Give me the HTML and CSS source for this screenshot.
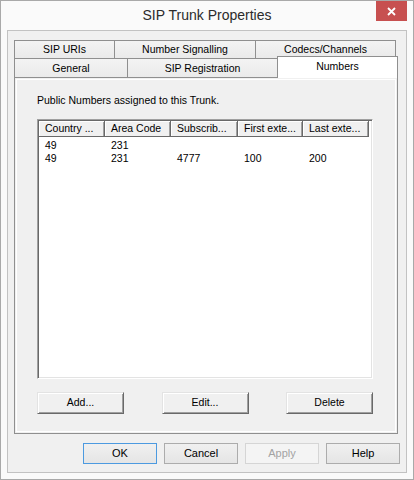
FILE: index.html
```html
<!DOCTYPE html>
<html lang="en">
<head>
  <meta charset="UTF-8">
  <title>SIP Trunk Properties</title>
  <link rel="stylesheet" href="styles.css">
</head>
<body>
  <div class="window">
    <div class="titlebar">
      <span class="title">SIP Trunk Properties</span>
      <button class="close" type="button" aria-label="Close">
        <svg width="9" height="9" viewBox="0 0 9 9">
          <path d="M1 1 L8 8 M8 1 L1 8" stroke="#fff" stroke-width="1.8" fill="none"/>
        </svg>
      </button>
    </div>

    <div class="client">
      <div class="tabs">
        <div class="tab-row">
          <div class="tab tab-uris">SIP URIs</div>
          <div class="tab tab-signalling">Number Signalling</div>
          <div class="tab tab-codecs">Codecs/Channels</div>
        </div>
        <div class="tab-row lower">
          <div class="tab tab-general">General</div>
          <div class="tab tab-registration">SIP Registration</div>
          <div class="tab tab-numbers active">Numbers</div>
        </div>
      </div>

      <div class="panel">
        <p class="hint">Public Numbers assigned to this Trunk.</p>

        <div class="listview">
          <div class="lv-head">
            <span>Country ...</span>
            <span>Area Code</span>
            <span>Subscrib...</span>
            <span>First exte...</span>
            <span>Last exte...</span>
          </div>
          <div class="lv-body">
            <div class="lv-row">
              <span>49</span><span>231</span><span></span><span></span><span></span>
            </div>
            <div class="lv-row">
              <span>49</span><span>231</span><span>4777</span><span>100</span><span>200</span>
            </div>
          </div>
        </div>

        <div class="panel-buttons">
          <button class="btn-classic" type="button">Add...</button>
          <button class="btn-classic" type="button">Edit...</button>
          <button class="btn-classic" type="button">Delete</button>
        </div>
      </div>

      <div class="dialog-buttons">
        <button class="btn default" type="button">OK</button>
        <button class="btn" type="button">Cancel</button>
        <button class="btn" type="button" disabled>Apply</button>
        <button class="btn" type="button">Help</button>
      </div>
    </div>
  </div>
</body>
</html>
```

FILE: styles.css
```css
* {
  box-sizing: border-box;
}
body {
  margin: 0;
  font-family: "Liberation Sans", Arial, sans-serif;
  font-size: 10.5px;
  color: #000;
  background: #fff;
}

/* window frame */
.window {
  width: 414px;
  height: 480px;
  border: 1px solid #a9a9a9;
  background: #fafafa;
  padding: 0 6px 6px;
  display: flex;
  flex-direction: column;
}
.titlebar {
  height: 29px;
  display: grid;
  grid-template-columns: 1fr auto 1fr;
  align-items: start;
}
.title {
  grid-column: 2;
  font-size: 14px;
  line-height: 29px;
  color: #2b2b2b;
}
.close {
  grid-column: 3;
  justify-self: end;
  width: 31px;
  height: 20px;
  padding: 0;
  border: 0;
  background: #c75050;
  display: flex;
  align-items: center;
  justify-content: center;
}
.client {
  flex: 1;
  border: 1px solid #c2c2c2;
  background: #f0f0f0;
  padding: 9px 0 0 6px;
}

/* tabs */
.tabs {
  width: 384px;
}
.tab-row {
  display: flex;
  align-items: flex-start;
}
.tab {
  height: 18px;
  line-height: 17px;
  margin-left: -1px;
  border: 1px solid #8f8f8f;
  border-bottom: 0;
  background: linear-gradient(#f3f3f3, #eaeaea);
  text-align: center;
  white-space: nowrap;
}
.tab:first-child {
  margin-left: 0;
}
.lower .tab {
  height: 19px;
  line-height: 18px;
}
.lower .tab.active {
  height: 22px;
  margin-top: -2px;
  margin-bottom: -1px;
  position: relative;
  z-index: 1;
  background: #fff;
}
.tab-uris { width: 101px; }
.tab-signalling { width: 142px; }
.tab-codecs { width: 141px; }
.tab-general { width: 114px; }
.tab-registration { width: 151px; }
.tab-numbers { width: 121px; }

.panel {
  width: 384px;
  height: 357px;
  border: 1px solid #8f8f8f;
  box-shadow: inset 0 0 0 1px #f0f0f0, inset 0 0 0 2px #fff;
  padding: 16px 0 0 22px;
  display: flex;
  flex-direction: column;
}
.hint {
  margin: 0;
  line-height: 13px;
}

/* list view */
.listview {
  margin-top: 12px;
  width: 336px;
  height: 260px;
  padding: 1px;
  background: #fff;
  border: 1px solid;
  border-color: #a0a0a0 #fff #fff #a0a0a0;
  box-shadow: inset 1px 1px 0 #696969, inset -1px -1px 0 #e3e3e3;
}
.lv-head,
.lv-row {
  display: grid;
  grid-template-columns: 66px 66px 67px 65px 66px;
}
.lv-head span {
  height: 16px;
  line-height: 14px;
  padding-left: 6px;
  background: #f0f0f0;
  border-right: 1px solid #696969;
  border-bottom: 1px solid #696969;
  box-shadow: inset 1px 1px 0 #fff, inset -1px 0 0 #a0a0a0;
  white-space: nowrap;
  overflow: hidden;
}
.lv-body {
  padding-top: 2px;
}
.lv-row span {
  height: 13px;
  line-height: 13px;
  padding-left: 6px;
  white-space: nowrap;
}

.panel-buttons {
  margin-top: 13px;
  width: 336px;
  display: flex;
  justify-content: space-between;
}
.btn-classic {
  width: 87px;
  height: 22px;
  padding: 0 0 3px;
  font: inherit;
  color: #000;
  background: #f0f0f0;
  border: 1px solid;
  border-color: #e3e3e3 #696969 #696969 #e3e3e3;
  box-shadow: inset 1px 1px 0 #fff, inset -1px -1px 0 #a0a0a0;
}

/* OK / Cancel row */
.dialog-buttons {
  margin-top: 9px;
  padding-right: 6px;
  display: flex;
  justify-content: flex-end;
  gap: 7px;
}
.btn {
  width: 74px;
  height: 21px;
  padding: 0 0 2px;
  font-family: "Liberation Sans", Arial, sans-serif;
  font-size: 11px;
  color: #000;
  border: 1px solid #acacac;
  background: linear-gradient(#f0f0f0, #e5e5e5);
}
.btn.default {
  border-color: #4c9ae0;
}
.btn:disabled {
  color: #a3a3a3;
  border-color: #d5d5d5;
  background: #f4f4f4;
}
```
